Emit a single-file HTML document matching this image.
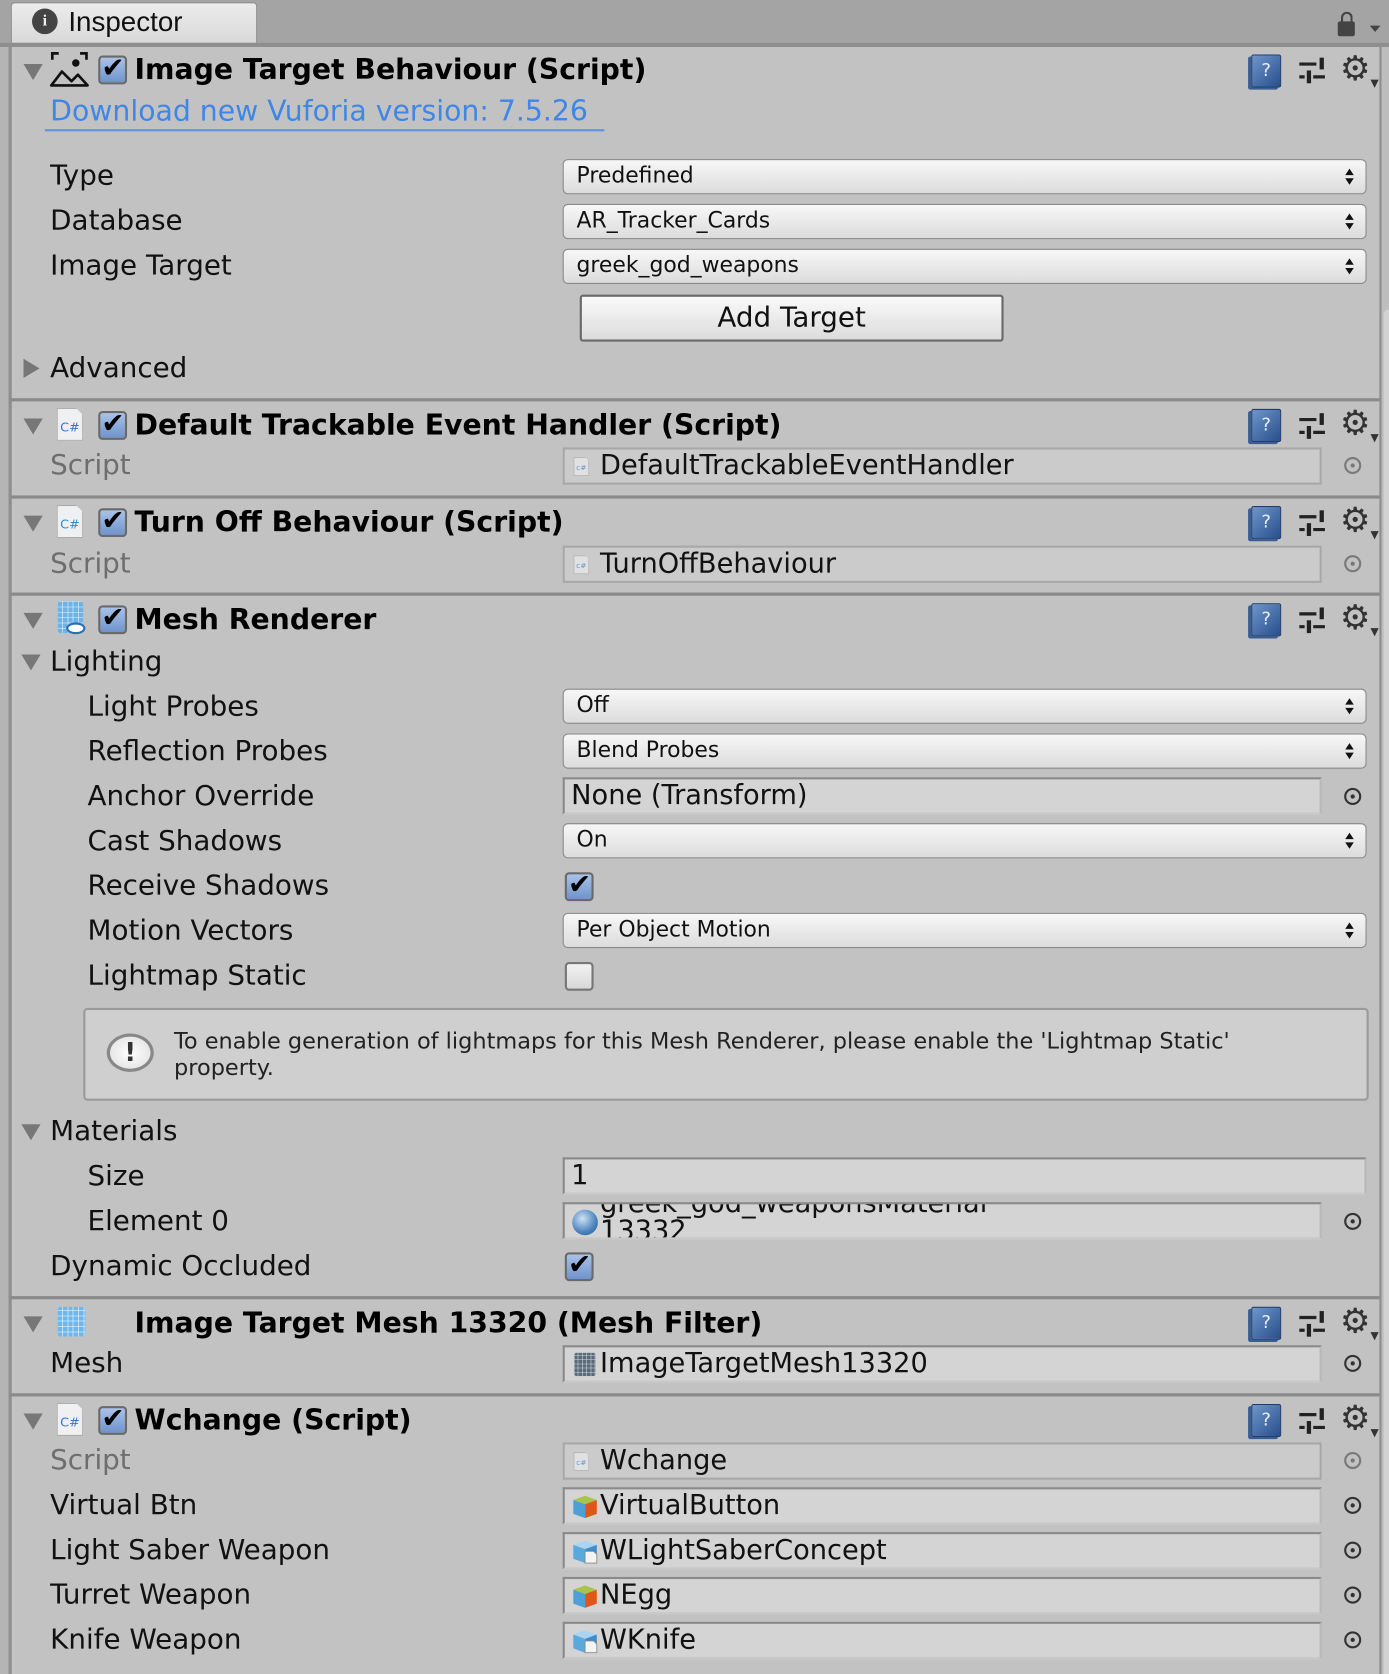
<!DOCTYPE html>
<html><head><meta charset="utf-8"><style>
html,body{margin:0;padding:0;width:1389px;height:1674px;overflow:hidden;background:#c2c2c2}
#w{position:absolute;left:0;top:0;width:1301px;height:1568px;transform:scale(1.06764);transform-origin:0 0;background:#c2c2c2;font-family:"DejaVu Sans","Liberation Sans",sans-serif}
#w div{position:absolute;box-sizing:border-box}
.l{font-size:26px;line-height:30px;height:30px;white-space:nowrap;color:#111}
.g{color:#6e6e6e}
.h{font-size:26.5px;font-weight:bold;line-height:30px;height:30px;white-space:nowrap;color:#000}
.dd{left:527px;width:753px;height:33px;border:1.5px solid #8a8a8a;border-radius:5px;background:linear-gradient(#f7f7f7,#dcdcdc);font-size:20.5px;line-height:29px;padding-left:12px;color:#111}
.dd:after{content:"";position:absolute;right:11px;top:8px;width:0;height:0;border-left:4px solid transparent;border-right:4px solid transparent;border-bottom:6px solid #111}
.dd:before{content:"";position:absolute;right:11px;top:17px;width:0;height:0;border-left:4px solid transparent;border-right:4px solid transparent;border-top:6px solid #111}
.of{left:527px;width:711px;height:35px;background:#d4d4d4;border:2px solid #8a8a8a;border-right-color:#b8b8b8;border-bottom-color:#c8c8c8;font-size:25.5px;line-height:30px;padding-left:33px;white-space:nowrap;overflow:hidden;color:#111}
.tg{left:1259px;width:16px;height:16px;border:2px solid #333;border-radius:50%}
.tg:after{content:"";position:absolute;left:4px;top:4px;width:4px;height:4px;background:#333;border-radius:50%}
.sep{left:10px;width:1282px;height:3px;background:#8a8a8a}
.tri{width:0;height:0;border-left:9px solid transparent;border-right:9px solid transparent;border-top:15px solid #777}
.trr{width:0;height:0;border-top:9px solid transparent;border-bottom:9px solid transparent;border-left:15px solid #777}
.cb{width:27px;height:27px;border:2px solid #6a6a6a;border-radius:4px;background:linear-gradient(#a9c3e8,#6e93cc)}
.cb span{position:absolute;left:1px;top:-5px;font-size:26px;font-weight:bold;color:#000;line-height:30px}
.cbo{width:27px;height:27px;border:2px solid #777;border-radius:4px;background:linear-gradient(#f2f2f2,#d8d8d8)}
.cs{width:25px;height:31px;background:#eef0f2;border:1px solid #aaa;clip-path:polygon(0 0,72% 0,100% 22%,100% 100%,0 100%);font-size:12px;color:#3b6fd0;line-height:14px;text-align:center;padding-top:10px}
.book{left:1172px;width:28px;height:31px;background:linear-gradient(135deg,#6f95cc,#284f8a);border:1px solid #1f3e6e;border-radius:2px;color:#e8eefa;font-size:17px;text-align:center;line-height:29px;box-shadow:-3px 2px 0 #3b5e92}
.sl{left:1216px;width:26px;height:26px}
.gear{left:1255px;font-size:32px;line-height:30px;color:#333}
</style></head><body><div id="w">
<div style="left:0;top:0;width:1301px;height:40px;background:#a4a4a4"></div>
<div style="left:10px;top:2px;width:231px;height:40px;background:linear-gradient(#ececec,#d8d8d8);border:1px solid #8d8d8d;border-bottom:none;border-radius:4px 4px 0 0"></div>
<div style="left:30px;top:8px;width:24px;height:24px;border-radius:50%;background:#444;color:#eee;font-size:15px;font-weight:bold;text-align:center;line-height:24px;font-family:'Liberation Serif',serif">i</div>
<div class="l" style="left:64px;top:5px;font-size:26px;font-family:'Liberation Sans',sans-serif">Inspector</div>
<div style="left:1253px;top:20px;width:16px;height:14px;background:#444;border-radius:2px"></div>
<div style="left:1256px;top:11px;width:11px;height:12px;border:2px solid #444;border-bottom:none;border-radius:6px 6px 0 0"></div>
<div style="left:1283px;top:24px;width:0;height:0;border-left:5px solid transparent;border-right:5px solid transparent;border-top:6px solid #444"></div>
<div style="left:0;top:40px;width:1301px;height:4px;background:#8e8e8e"></div>
<div style="left:0;top:44px;width:8px;height:1524px;background:#b5b5b5"></div>
<div style="left:8px;top:44px;width:3px;height:1524px;background:#8e8e8e"></div>
<div style="left:1292px;top:44px;width:9px;height:1524px;background:#bdbdbd"></div>
<div style="left:1292px;top:44px;width:2px;height:1524px;background:#8e8e8e"></div>
<div style="left:1296px;top:290px;width:5px;height:1278px;background:#d2d2d2;border-radius:4px 0 0 0"></div>

<div class="tri" style="left:22px;top:60px"></div>
<svg style="position:absolute;left:46px;top:46px" width="38" height="36" viewBox="0 0 38 36"><path d="M3 10V4h6M29 4h6v6" stroke="#111" stroke-width="2.5" fill="none"/><circle cx="25" cy="13" r="3.5" fill="#111"/><path d="M2 34L12 21l9 9 6-6 9 10z M2 34h34" stroke="#111" stroke-width="2.5" fill="none" stroke-linejoin="round"/></svg>
<div class="cb" style="left:92px;top:52px"><span>✔</span></div>
<div class="h" style="left:126px;top:51px">Image Target Behaviour (Script)</div>
<div class="book" style="top:51px">?</div>
<svg class="sl" style="position:absolute;top:53px" viewBox="0 0 26 26"><path d="M1 7h16M1 19h5M14 19h11" stroke="#222" stroke-width="3"/><rect x="20" y="1" width="4" height="11" fill="#222"/><rect x="8" y="13" width="4" height="12" fill="#222"/></svg>
<div class="gear" style="top:49px">⚙<span style="font-size:10px;vertical-align:-6px">▼</span></div>
<div class="l" style="left:47px;top:90px;color:#3f86e6;font-size:26.5px">Download new Vuforia version: 7.5.26</div>
<div style="left:42px;top:121px;width:524px;height:2px;background:#5b93e0"></div>

<div class="l" style="left:47px;top:150px">Type</div>
<div class="dd" style="top:149px">Predefined</div>
<div class="l" style="left:47px;top:192px">Database</div>
<div class="dd" style="top:191px">AR_Tracker_Cards</div>
<div class="l" style="left:47px;top:234px">Image Target</div>
<div class="dd" style="top:233px">greek_god_weapons</div>
<div style="left:543px;top:276px;width:397px;height:44px;border:2px solid #6a6a6a;border-radius:3px;background:linear-gradient(#fafafa,#dcdcdc);font-size:26px;text-align:center;line-height:40px;color:#111">Add Target</div>
<div class="trr" style="left:22px;top:336px"></div>
<div class="l" style="left:47px;top:330px">Advanced</div>
<div class="sep" style="top:373px"></div>

<div class="tri" style="left:22px;top:392px"></div>
<div class="cs" style="left:53px;top:382px">C#</div>
<div class="cb" style="left:92px;top:385px"><span>✔</span></div>
<div class="h" style="left:126px;top:384px">Default Trackable Event Handler (Script)</div>
<div class="book" style="top:383px">?</div>
<svg class="sl" style="position:absolute;top:386px" viewBox="0 0 26 26"><path d="M1 7h16M1 19h5M14 19h11" stroke="#222" stroke-width="3"/><rect x="20" y="1" width="4" height="11" fill="#222"/><rect x="8" y="13" width="4" height="12" fill="#222"/></svg>
<div class="gear" style="top:381px">⚙<span style="font-size:10px;vertical-align:-6px">▼</span></div>
<div class="l g" style="left:47px;top:421px">Script</div>
<div class="of g" style="top:419px;background:#cbcbcb;border-color:#a8a8a8"><div class="cs" style="left:8px;top:7px;width:15px;height:18px;font-size:7px;padding-top:6px;line-height:7px;opacity:.6">c#</div>DefaultTrackableEventHandler</div>
<div class="tg" style="top:428px;opacity:.5"></div>
<div class="sep" style="top:464px"></div>

<div class="tri" style="left:22px;top:483px"></div>
<div class="cs" style="left:53px;top:473px;color:#2e8ad0">C#</div>
<div class="cb" style="left:92px;top:476px"><span>✔</span></div>
<div class="h" style="left:126px;top:475px">Turn Off Behaviour (Script)</div>
<div class="book" style="top:474px">?</div>
<svg class="sl" style="position:absolute;top:477px" viewBox="0 0 26 26"><path d="M1 7h16M1 19h5M14 19h11" stroke="#222" stroke-width="3"/><rect x="20" y="1" width="4" height="11" fill="#222"/><rect x="8" y="13" width="4" height="12" fill="#222"/></svg>
<div class="gear" style="top:472px">⚙<span style="font-size:10px;vertical-align:-6px">▼</span></div>
<div class="l g" style="left:47px;top:513px">Script</div>
<div class="of g" style="top:511px;background:#cbcbcb;border-color:#a8a8a8"><div class="cs" style="left:8px;top:7px;width:15px;height:18px;font-size:7px;padding-top:6px;line-height:7px;opacity:.6">c#</div>TurnOffBehaviour</div>
<div class="tg" style="top:520px;opacity:.5"></div>
<div class="sep" style="top:555px"></div>

<div class="tri" style="left:22px;top:574px"></div>
<div style="left:54px;top:563px;width:24px;height:30px;background:repeating-linear-gradient(90deg,transparent 0 4px,rgba(255,255,255,.5) 4px 5px),repeating-linear-gradient(0deg,#6fb3e6 0 4px,#a8d4f4 4px 5px);border-radius:3px"></div>
<div style="left:62px;top:583px;width:18px;height:11px;background:#fff;border:2px solid #2a6fb0;border-radius:50%"></div>
<div class="cb" style="left:92px;top:567px"><span>✔</span></div>
<div class="h" style="left:126px;top:566px">Mesh Renderer</div>
<div class="book" style="top:565px">?</div>
<svg class="sl" style="position:absolute;top:568px" viewBox="0 0 26 26"><path d="M1 7h16M1 19h5M14 19h11" stroke="#222" stroke-width="3"/><rect x="20" y="1" width="4" height="11" fill="#222"/><rect x="8" y="13" width="4" height="12" fill="#222"/></svg>
<div class="gear" style="top:563px">⚙<span style="font-size:10px;vertical-align:-6px">▼</span></div>
<div class="tri" style="left:20px;top:613px"></div>
<div class="l" style="left:47px;top:605px">Lighting</div>
<div class="l" style="left:82px;top:647px">Light Probes</div>
<div class="dd" style="top:645px">Off</div>
<div class="l" style="left:82px;top:689px">Reflection Probes</div>
<div class="dd" style="top:687px">Blend Probes</div>
<div class="l" style="left:82px;top:731px">Anchor Override</div>
<div class="of" style="top:728px;padding-left:6px">None (Transform)</div>
<div class="tg" style="top:738px"></div>
<div class="l" style="left:82px;top:773px">Cast Shadows</div>
<div class="dd" style="top:771px">On</div>
<div class="l" style="left:82px;top:815px">Receive Shadows</div>
<div class="cb" style="left:529px;top:817px"><span>✔</span></div>
<div class="l" style="left:82px;top:857px">Motion Vectors</div>
<div class="dd" style="top:855px">Per Object Motion</div>
<div class="l" style="left:82px;top:899px">Lightmap Static</div>
<div class="cbo" style="left:529px;top:901px"></div>
<div style="left:78px;top:944px;width:1204px;height:87px;border:2px solid #9a9a9a;border-radius:4px;background:#cfcfcf"></div>
<div style="left:100px;top:968px;width:44px;height:36px;border:3px solid #888;border-radius:50%;background:radial-gradient(#fff,#ddd);font-size:24px;font-weight:bold;text-align:center;line-height:30px;color:#333">!</div>
<div style="left:163px;top:963px;width:1060px;font-size:21px;line-height:25px;color:#222">To enable generation of lightmaps for this Mesh Renderer, please enable the 'Lightmap Static' property.</div>
<div class="tri" style="left:20px;top:1053px"></div>
<div class="l" style="left:47px;top:1045px">Materials</div>
<div class="l" style="left:82px;top:1087px">Size</div>
<div class="of" style="top:1084px;width:753px;padding-left:6px">1</div>
<div class="l" style="left:82px;top:1129px">Element 0</div>
<div class="of" style="top:1126px;line-height:18px;padding-top:0"><div style="left:7px;top:5px;width:24px;height:24px;border-radius:50%;background:radial-gradient(circle at 40% 35%,#cfe3f5,#4a82bd 60%,#2b5a8f)"></div><div style="left:33px;top:-14px;font-size:25.5px;line-height:26px">greek_god_weaponsMaterial<br>13332</div></div>
<div class="tg" style="top:1136px"></div>
<div class="l" style="left:47px;top:1171px">Dynamic Occluded</div>
<div class="cb" style="left:529px;top:1173px"><span>✔</span></div>
<div class="sep" style="top:1214px"></div>

<div class="tri" style="left:22px;top:1233px"></div>
<div style="left:54px;top:1224px;width:26px;height:28px;background:repeating-linear-gradient(90deg,transparent 0 4px,rgba(255,255,255,.55) 4px 5px),repeating-linear-gradient(0deg,#6fb6ea 0 4px,#b3dcf6 4px 5px);border-radius:3px"></div>
<div class="h" style="left:126px;top:1225px">Image Target Mesh 13320 (Mesh Filter)</div>
<div class="book" style="top:1224px">?</div>
<svg class="sl" style="position:absolute;top:1227px" viewBox="0 0 26 26"><path d="M1 7h16M1 19h5M14 19h11" stroke="#222" stroke-width="3"/><rect x="20" y="1" width="4" height="11" fill="#222"/><rect x="8" y="13" width="4" height="12" fill="#222"/></svg>
<div class="gear" style="top:1222px">⚙<span style="font-size:10px;vertical-align:-6px">▼</span></div>
<div class="l" style="left:47px;top:1262px">Mesh</div>
<div class="of" style="top:1260px"><div style="left:9px;top:5px;width:20px;height:22px;background:repeating-linear-gradient(90deg,transparent 0 3px,rgba(255,255,255,.4) 3px 4px),repeating-linear-gradient(0deg,#5c6a78 0 3px,#8fa0b0 3px 4px);border-radius:2px"></div>ImageTargetMesh13320</div>
<div class="tg" style="top:1269px"></div>
<div class="sep" style="top:1305px"></div>

<div class="tri" style="left:22px;top:1324px"></div>
<div class="cs" style="left:53px;top:1314px">C#</div>
<div class="cb" style="left:92px;top:1317px"><span>✔</span></div>
<div class="h" style="left:126px;top:1316px">Wchange (Script)</div>
<div class="book" style="top:1315px">?</div>
<svg class="sl" style="position:absolute;top:1318px" viewBox="0 0 26 26"><path d="M1 7h16M1 19h5M14 19h11" stroke="#222" stroke-width="3"/><rect x="20" y="1" width="4" height="11" fill="#222"/><rect x="8" y="13" width="4" height="12" fill="#222"/></svg>
<div class="gear" style="top:1313px">⚙<span style="font-size:10px;vertical-align:-6px">▼</span></div>
<div class="l g" style="left:47px;top:1353px">Script</div>
<div class="of g" style="top:1351px;background:#cbcbcb;border-color:#a8a8a8"><div class="cs" style="left:8px;top:7px;width:15px;height:18px;font-size:7px;padding-top:6px;line-height:7px;opacity:.6">c#</div>Wchange</div>
<div class="tg" style="top:1360px;opacity:.5"></div>

<div class="l" style="left:47px;top:1395px">Virtual Btn</div>
<div class="of" style="top:1393px"><svg style="position:absolute;left:6px;top:4px" width="26" height="24" viewBox="0 0 26 24"><path d="M2 6l11-4 11 4-11 4z" fill="#a8c44a"/><path d="M2 6l11 4v13L2 19z" fill="#4d9fd6"/><path d="M24 6l-11 4v13l11-4z" fill="#e0561a"/></svg>VirtualButton</div>
<div class="tg" style="top:1402px"></div>
<div class="l" style="left:47px;top:1437px">Light Saber Weapon</div>
<div class="of" style="top:1435px"><svg style="position:absolute;left:6px;top:4px" width="26" height="24" viewBox="0 0 26 24"><path d="M2 6l11-4 11 4-11 4z" fill="#a9d5f2"/><path d="M2 6l11 4v13L2 19z" fill="#5aa8dc"/><path d="M24 6l-11 4v13l11-4z" fill="#3e8ccc"/><path d="M13 12h8l3 3v8h-11z" fill="#f4f4f4" stroke="#888" stroke-width=".8"/></svg>WLightSaberConcept</div>
<div class="tg" style="top:1444px"></div>
<div class="l" style="left:47px;top:1479px">Turret Weapon</div>
<div class="of" style="top:1477px"><svg style="position:absolute;left:6px;top:4px" width="26" height="24" viewBox="0 0 26 24"><path d="M2 6l11-4 11 4-11 4z" fill="#a8c44a"/><path d="M2 6l11 4v13L2 19z" fill="#4d9fd6"/><path d="M24 6l-11 4v13l11-4z" fill="#e0561a"/></svg>NEgg</div>
<div class="tg" style="top:1486px"></div>
<div class="l" style="left:47px;top:1521px">Knife Weapon</div>
<div class="of" style="top:1519px"><svg style="position:absolute;left:6px;top:4px" width="26" height="24" viewBox="0 0 26 24"><path d="M2 6l11-4 11 4-11 4z" fill="#a9d5f2"/><path d="M2 6l11 4v13L2 19z" fill="#5aa8dc"/><path d="M24 6l-11 4v13l11-4z" fill="#3e8ccc"/><path d="M13 12h8l3 3v8h-11z" fill="#f4f4f4" stroke="#888" stroke-width=".8"/></svg>WKnife</div>
<div class="tg" style="top:1528px"></div>
</div></body></html>
